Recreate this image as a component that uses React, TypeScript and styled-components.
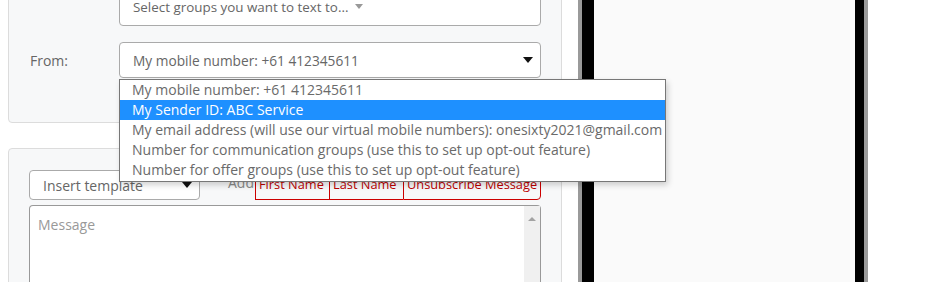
import React from 'react';
import styled, { createGlobalStyle } from 'styled-components';

const GlobalStyle = createGlobalStyle`
  html, body {
    margin: 0;
    padding: 0;
    background: #ffffff;
    overflow: hidden;
  }
  body {
    font-family: 'Open Sans', 'Liberation Sans', sans-serif;
    font-size: 14px;
    color: #666;
  }
`;

const Page = styled.div`
  display: flex;
  align-items: stretch;
  height: 282px;
  overflow: hidden;
`;

const FormColumn = styled.div`
  width: 554px;
  padding-left: 8px;
  display: flex;
  flex-direction: column;
  gap: 25px;
`;

const Panel = styled.div<{ $cutTop?: number }>`
  background: #f7f8f9;
  border: 1px solid #dcdcdc;
  border-radius: 4px;
  margin-top: ${(p) => (p.$cutTop ? `-${p.$cutTop}px` : '0')};
  padding: 0 20px;
`;

const FieldRow = styled.div`
  display: flex;
  align-items: center;
  margin-top: 16px;
`;

const Label = styled.div`
  width: 89px;
  padding-left: 1px;
  color: #666;
  font-size: 14px;
`;

const SelectBox = styled.div<{ $width?: number; $height?: number }>`
  position: relative;
  box-sizing: border-box;
  width: ${(p) => (p.$width ? `${p.$width}px` : 'auto')};
  flex: ${(p) => (p.$width ? 'none' : '1')};
  height: ${(p) => p.$height ?? 36}px;
  background: #fff;
  border: 1px solid #aaa;
  border-radius: 4px;
  display: flex;
  align-items: center;
  padding: 0 7px 0 13px;
  color: #666;
  font-size: 14px;
`;

const SelectText = styled.span<{ $size?: number; $fill?: boolean }>`
  flex: ${(p) => (p.$fill === false ? 'none' : '1')};
  font-size: ${(p) => p.$size ?? 14}px;
  white-space: nowrap;
`;

const Caret = styled.span<{ $grey?: boolean }>`
  width: 0;
  height: 0;
  border-left: ${(p) => (p.$grey ? 4 : 5)}px solid transparent;
  border-right: ${(p) => (p.$grey ? 4 : 5)}px solid transparent;
  border-top: ${(p) => (p.$grey ? 5 : 6)}px solid ${(p) => (p.$grey ? '#999' : '#111')};
  margin-left: ${(p) => (p.$grey ? '7px' : '0')};
`;

const Dropdown = styled.ul`
  position: absolute;
  top: 36px;
  left: -1px;
  width: 547px;
  box-sizing: border-box;
  margin: 0;
  padding: 0 0 1px;
  list-style: none;
  background: #fff;
  border: 1px solid #777;
  box-shadow: 2px 3px 6px rgba(0, 0, 0, 0.18);
  z-index: 5;
`;

const Option = styled.li<{ $active?: boolean }>`
  height: 20px;
  line-height: 20px;
  padding-left: 12px;
  white-space: nowrap;
  font-size: 14px;
  color: ${(p) => (p.$active ? '#fff' : '#6a6a6a')};
  background: ${(p) => (p.$active ? '#1e90ff' : 'transparent')};
`;

const ToolRow = styled.div`
  display: flex;
  align-items: flex-end;
  margin-top: 21px;
`;

const AddLabel = styled.span`
  margin-left: 28px;
  color: #888;
  line-height: 26px;
  align-self: flex-start;
`;

const TagGroup = styled.div`
  display: flex;
  height: 29px;
  margin-left: auto;
`;

const Tag = styled.span<{ $w: number; $last?: boolean }>`
  box-sizing: border-box;
  width: ${(p) => p.$w}px;
  border: 1px solid #c00;
  border-right: ${(p) => (p.$last ? '1px solid #c00' : 'none')};
  border-radius: ${(p) => (p.$last ? '0 0 4px 0' : '0')};
  color: #b00;
  padding-left: 3px;
  line-height: 25px;
  font-size: 12.8px;
  white-space: nowrap;
  overflow: hidden;
`;

const MessageBox = styled.div`
  display: flex;
  margin-top: 5px;
  height: 90px;
  background: #fff;
  border: 1px solid #999;
  border-radius: 4px 4px 0 0;
  border-bottom: none;
`;

const Placeholder = styled.div`
  flex: 1;
  padding: 9px 8px;
  color: #999;
  font-size: 14px;
`;

const Scrollbar = styled.div`
  width: 16px;
  background: #f0f0f0;
  display: flex;
  justify-content: center;
  padding-top: 11px;
`;

const ArrowUp = styled.span`
  width: 0;
  height: 0;
  border-left: 4px solid transparent;
  border-right: 4px solid transparent;
  border-bottom: 4px solid #a3a3a3;
`;

const Phone = styled.div`
  margin-left: 16px;
  width: 290px;
  box-sizing: border-box;
  border-left: 4px solid #9a9a9a;
  border-right: 4px solid #9a9a9a;
  background: #000;
  padding: 0 9px 0 12px;
  display: flex;
`;

const Screen = styled.div`
  flex: 1;
  background: #fafafa;
`;

const options = [
  'My mobile number: +61 412345611',
  'My Sender ID: ABC Service',
  'My email address (will use our virtual mobile numbers): onesixty2021@gmail.com',
  'Number for communication groups (use this to set up opt-out feature)',
  'Number for offer groups (use this to set up opt-out feature)',
];

export default function App() {
  return (
    <>
      <GlobalStyle />
      <Page>
        <FormColumn>
          <Panel $cutTop={30}>
            <FieldRow>
              <Label />
              <SelectBox $height={39}>
                <SelectText $fill={false} $size={13.4}>
                  Select groups you want to text to...
                </SelectText>
                <Caret $grey />
              </SelectBox>
            </FieldRow>
            <FieldRow style={{ marginBottom: 44 }}>
              <Label>From:</Label>
              <SelectBox>
                <SelectText $size={13.7}>My mobile number: +61 412345611</SelectText>
                <Caret />
                <Dropdown>
                  {options.map((o, i) => (
                    <Option key={o} $active={i === 1}>
                      {o}
                    </Option>
                  ))}
                </Dropdown>
              </SelectBox>
            </FieldRow>
          </Panel>
          <Panel>
            <ToolRow>
              <SelectBox $width={171} $height={30}>
                <SelectText>Insert template</SelectText>
                <Caret />
              </SelectBox>
              <AddLabel>Add</AddLabel>
              <TagGroup>
                <Tag $w={74}>First Name</Tag>
                <Tag $w={74}>Last Name</Tag>
                <Tag $w={138} $last>
                  Unsubscribe Message
                </Tag>
              </TagGroup>
            </ToolRow>
            <MessageBox>
              <Placeholder>Message</Placeholder>
              <Scrollbar>
                <ArrowUp />
              </Scrollbar>
            </MessageBox>
          </Panel>
        </FormColumn>
        <Phone>
          <Screen />
        </Phone>
      </Page>
    </>
  );
}
